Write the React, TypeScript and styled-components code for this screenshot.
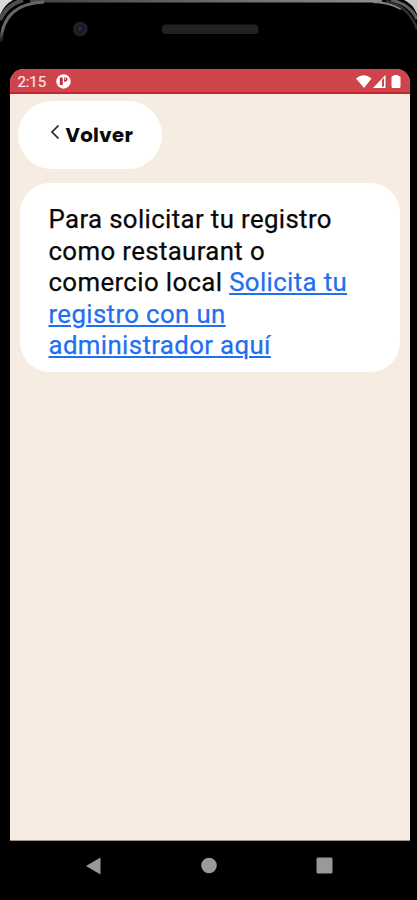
import React from 'react';
import styled, { createGlobalStyle } from 'styled-components';

const GlobalStyle = createGlobalStyle`
  * { box-sizing: border-box; }
  body { margin: 0; background: #000; }
`;

const Phone = styled.div`
  width: 417px;
  height: 900px;
  display: flex;
  flex-direction: column;
  background: #000;
  overflow: hidden;
`;

const Bezel = styled.header`
  height: 69px;
  flex: none;
  svg { display: block; }
`;

const Screen = styled.main`
  width: 400px;
  height: 772px;
  flex: none;
  margin-left: 9.5px;
  display: flex;
  flex-direction: column;
  background: #f6ece1;
  border-radius: 14px 14px 0 0;
  border-bottom: 1px solid #9b958e;
  overflow: hidden;
`;

const StatusBar = styled.div`
  height: 25px;
  flex: none;
  display: flex;
  align-items: center;
  justify-content: space-between;
  padding: 2px 7.5px 0 8px;
  background: #cf434b;
  border-bottom: 2px solid #c32632;
`;

const StatusGroup = styled.div`
  display: flex;
  align-items: center;
  svg { display: block; }
`;

const Clock = styled.span`
  width: 38.5px;
  color: #fae3e3;
  font: 400 15px/20px Roboto, sans-serif;
  -webkit-text-stroke: 0.2px #fae3e3;
  letter-spacing: -0.1px;
`;

const Content = styled.div`
  display: flex;
  flex-direction: column;
  align-items: flex-start;
  gap: 14px;
  padding: 7px 9.5px 0 8px;
`;

const BackButton = styled.button`
  width: 144.5px;
  height: 68px;
  display: flex;
  align-items: center;
  gap: 5px;
  padding: 0 0 0 32px;
  border: 0;
  border-radius: 34px;
  background: #fff;
  color: #090909;
  font: 700 19.7px/24px Poppins, Inter, sans-serif;
  letter-spacing: 0.35px;
  svg { margin-top: -6px; }
`;

const Card = styled.section`
  width: 380px;
  height: 189px;
  margin-left: 2px;
  padding: 21.3px 30px 0 29px;
  border-radius: 30px;
  background: #fff;
`;

const Message = styled.p`
  margin: 0;
  color: #080808;
  font: 400 25.8px/31.4px Roboto, sans-serif;
  letter-spacing: 0.37px;
  -webkit-text-stroke: 0.25px currentColor;
`;

const RequestLink = styled.a`
  color: #1f6ff0;
  text-decoration: underline;
  text-decoration-thickness: 2px;
  text-underline-offset: 2px;
`;

const NavBar = styled.nav`
  display: flex;
  justify-content: space-between;
  padding: 16px 84px 0 85px;
  svg { display: block; }
`;

export default function App() {
  return (
    <Phone>
      <GlobalStyle />
      <Bezel>
        <svg width="417" height="69" viewBox="0 0 417 69">
          <defs>
            <linearGradient id="rim" gradientUnits="userSpaceOnUse" x1="0" y1="0" x2="417" y2="0">
              <stop stopColor="#45484a" />
              <stop offset=".12" stopColor="#45484a" />
              <stop offset=".3" stopColor="#555759" />
              <stop offset=".65" stopColor="#737576" />
              <stop offset=".9" stopColor="#8d8d8d" />
              <stop offset="1" stopColor="#444" />
            </linearGradient>
            <linearGradient id="edge" gradientUnits="userSpaceOnUse" x1="0" y1="0" x2="0" y2="44">
              <stop stopColor="#65686a" />
              <stop offset=".7" stopColor="#65696b" />
              <stop offset="1" stopColor="#000" />
            </linearGradient>
          </defs>
          <path d="M0 0H13Q4 5 0 15Z" fill="#d8d8d8" />
          <path d="M417 0H404Q413 4 417 14Z" fill="#c8c8c8" />
          <path d="M0 20Q6 5 23 0" fill="none" stroke="#4b4d4e" strokeWidth="4" />
          <path d="M30 1H382" stroke="url(#rim)" strokeWidth="3" />
          <path d="M1 42Q2 4 44 2" fill="none" stroke="url(#edge)" strokeWidth="3" />
          <path d="M373 2Q388 2 401 9" fill="none" stroke="#858585" strokeWidth="2" />
          <path d="M391 0Q410 4 417 19" fill="none" stroke="#606060" strokeWidth="3" />
          <path d="M386 1Q409 6 417 29" fill="none" stroke="#303030" strokeWidth="2.5" />
          <circle cx="80.3" cy="29" r="7.3" fill="#202124" />
          <circle cx="80.3" cy="29" r="4.2" fill="#161626" />
          <circle cx="80" cy="28.5" r="2" fill="#2b2c4c" />
          <rect x="162" y="24.5" width="96.5" height="9.5" rx="4" fill="#222" />
        </svg>
      </Bezel>
      <Screen>
        <StatusBar>
          <StatusGroup>
            <Clock>2:15</Clock>
            <svg width="15" height="15" viewBox="0 0 15 15">
              <circle cx="7.5" cy="7.5" r="7.2" fill="#fff" />
              <path d="M3.8 3.5H6.8V11H3.8ZM8 3.5H10.2Q12 3.6 11.5 5.8Q10.8 8 8 7.7Z" fill="#c3313c" />
              <path d="M8.7 4.2H10V5.4H8.7Z" fill="#fff" />
            </svg>
          </StatusGroup>
          <StatusGroup>
            <svg width="46" height="16" viewBox="0 0 46 16" fill="#fff">
              <path d="M0 4.5Q7.5-2 15.5 4.5L8 14Z" />
              <path fillRule="evenodd" d="M17 14L29.5 1V14ZM26 6V12.5H28V4Z" />
              <path d="M37.5 1H42V2H43.2Q44.5 2 44.5 3.5V12.5Q44.5 14 43 14H37Q35.5 14 35.5 12.5V3.5Q35.5 2 36.5 2H37.5Z" />
            </svg>
          </StatusGroup>
        </StatusBar>
        <Content>
          <BackButton>
            <svg width="11" height="16" viewBox="0 0 11 16" fill="none" stroke="#222" strokeWidth="1.7">
              <path d="M8.5 1.5L2 8L8.5 14.5" />
            </svg>
            Volver
          </BackButton>
          <Card>
            <Message>
              Para solicitar tu registro<br />como restaurant o<br />comercio local{' '}
              <RequestLink>Solicita tu<br />registro con un<br />administrador aquí</RequestLink>
            </Message>
          </Card>
        </Content>
      </Screen>
      <NavBar>
        <svg width="16" height="18" viewBox="0 0 16 18"><path d="M1 9L15.5 .5V17.5Z" fill="#999" /></svg>
        <svg width="16" height="18" viewBox="0 0 16 18"><circle cx="8" cy="8.5" r="7.8" fill="#999" /></svg>
        <svg width="17" height="18" viewBox="0 0 17 18"><rect x=".5" y=".5" width="16" height="16" rx="1.5" fill="#999" /></svg>
      </NavBar>
    </Phone>
  );
}
